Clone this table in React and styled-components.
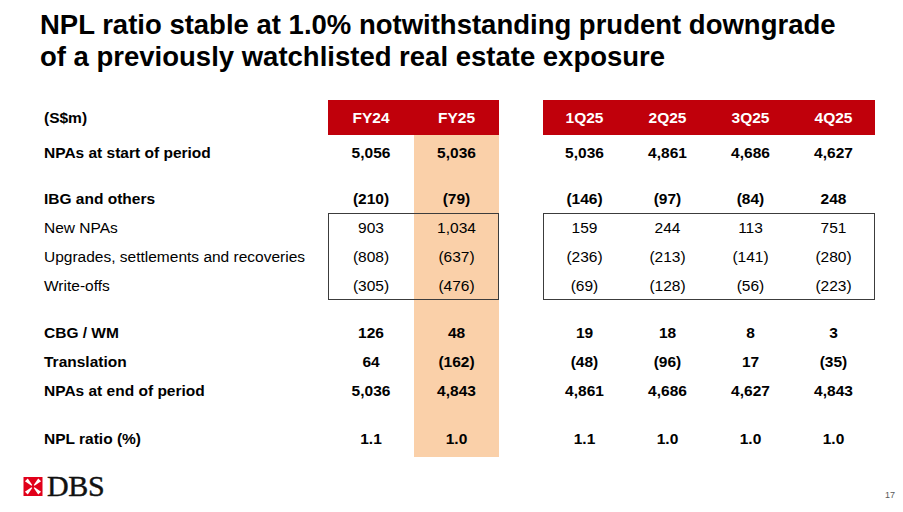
import styled, { createGlobalStyle } from 'styled-components'

const GlobalStyle = createGlobalStyle`
  html, body {
    margin: 0;
    padding: 0;
    background: #fff;
  }
  body {
    font-family: "Liberation Sans", Arial, sans-serif;
    color: #000;
  }
`

const FY = ['FY24', 'FY25']
const QS = ['1Q25', '2Q25', '3Q25', '4Q25']

const rows = [
  { row: 2, label: 'NPAs at start of period', bold: true, fy: ['5,056', '5,036'], q: ['5,036', '4,861', '4,686', '4,627'] },
  { row: 4, label: 'IBG and others', bold: true, fy: ['(210)', '(79)'], q: ['(146)', '(97)', '(84)', '248'] },
  { row: 5, label: 'New NPAs', fy: ['903', '1,034'], q: ['159', '244', '113', '751'] },
  { row: 6, label: 'Upgrades, settlements and recoveries', fy: ['(808)', '(637)'], q: ['(236)', '(213)', '(141)', '(280)'] },
  { row: 7, label: 'Write-offs', fy: ['(305)', '(476)'], q: ['(69)', '(128)', '(56)', '(223)'] },
  { row: 9, label: 'CBG / WM', bold: true, fy: ['126', '48'], q: ['19', '18', '8', '3'] },
  { row: 10, label: 'Translation', bold: true, fy: ['64', '(162)'], q: ['(48)', '(96)', '17', '(35)'] },
  { row: 11, label: 'NPAs at end of period', bold: true, fy: ['5,036', '4,843'], q: ['4,861', '4,686', '4,627', '4,843'] },
  { row: 13, label: 'NPL ratio (%)', bold: true, fy: ['1.1', '1.0'], q: ['1.1', '1.0', '1.0', '1.0'] },
]

export default function App() {
  return (
    <>
      <GlobalStyle />
      <Slide>
        <Title>
          NPL ratio stable at 1.0% notwithstanding prudent downgrade
          <br />
          of a previously watchlisted real estate exposure
        </Title>

        <Table>
          <Peach />
          <HeaderBar $col="2 / 4" />
          <HeaderBar $col="5 / 9" />
          <Frame $col="2 / 4" />
          <Frame $col="5 / 9" />

          <Label $row={1} $bold>(S$m)</Label>
          {FY.map((h, i) => (
            <Head key={h} $row={1} $col={2 + i}>{h}</Head>
          ))}
          {QS.map((h, i) => (
            <Head key={h} $row={1} $col={5 + i}>{h}</Head>
          ))}

          {rows.map((r) => (
            <Row key={r.label} r={r} />
          ))}
        </Table>

        <Footer>
          <Logo>
            <svg width="20" height="19" viewBox="0 0 20 20">
              <rect x="0" y="0" width="20" height="20" fill="#E1001A" />
              <polygon points="1.5,4.5 4.5,1.5 9.2,8.4 8.4,9.2" fill="#fff" />
              <polygon points="18.5,4.5 15.5,1.5 10.8,8.4 11.6,9.2" fill="#fff" />
              <polygon points="1.5,15.5 4.5,18.5 9.2,11.6 8.4,10.8" fill="#fff" />
              <polygon points="18.5,15.5 15.5,18.5 10.8,11.6 11.6,10.8" fill="#fff" />
            </svg>
            <LogoText>DBS</LogoText>
          </Logo>
          <PageNum>17</PageNum>
        </Footer>
      </Slide>
    </>
  )
}

function Row({ r }) {
  return (
    <>
      <Label $row={r.row} $bold={r.bold}>{r.label}</Label>
      {r.fy.map((v, i) => (
        <Num key={'f' + i} $row={r.row} $col={2 + i} $bold={r.bold}>{v}</Num>
      ))}
      {r.q.map((v, i) => (
        <Num key={'q' + i} $row={r.row} $col={5 + i} $bold={r.bold}>{v}</Num>
      ))}
    </>
  )
}

const Slide = styled.div`
  width: 903px;
  height: 512px;
  display: flex;
  flex-direction: column;
  overflow: hidden;
`

const Title = styled.h1`
  margin: 9px 0 0 40px;
  font-size: 27.5px;
  line-height: 32px;
  font-weight: 700;
  color: #000;
`

const Table = styled.div`
  margin: 27px 0 0 40px;
  display: grid;
  grid-template-columns: 288px 86px 85px 44px repeat(4, 83px);
  grid-template-rows: 35px 35px 14px 29px 29px 29px 29px 18px 29px 29px 29px 16px 36px;
  font-size: 15.5px;
`

const Peach = styled.div`
  grid-column: 3;
  grid-row: 2 / 14;
  background: #fad0a9;
`

const HeaderBar = styled.div`
  grid-row: 1;
  grid-column: ${(p) => p.$col};
  background: #c0000b;
`

const Frame = styled.div`
  grid-row: 5 / 8;
  grid-column: ${(p) => p.$col};
  border: 1px solid #3c3c3c;
`

const Cell = styled.div`
  grid-row: ${(p) => p.$row};
  grid-column: ${(p) => p.$col || 1};
  display: flex;
  align-items: center;
  font-weight: ${(p) => (p.$bold ? 700 : 400)};
  white-space: nowrap;
`

const Label = styled(Cell)`
  padding-left: 4px;
`

const Num = styled(Cell)`
  justify-content: center;
`

const Head = styled(Cell)`
  justify-content: center;
  color: #fff;
  font-weight: 700;
`

const Footer = styled.div`
  margin-top: auto;
  display: flex;
  justify-content: space-between;
  align-items: flex-end;
  padding: 0 8px 12px 23px;
`

const Logo = styled.div`
  display: flex;
  align-items: center;
  gap: 4px;
  margin-bottom: 2px;
`

const LogoText = styled.span`
  font-family: "Liberation Serif", "Times New Roman", serif;
  font-size: 30px;
  line-height: 24px;
  color: #111;
  letter-spacing: -0.3px;
  -webkit-text-stroke: 0.4px #111;
`

const PageNum = styled.span`
  font-size: 9px;
  color: #595959;
`
